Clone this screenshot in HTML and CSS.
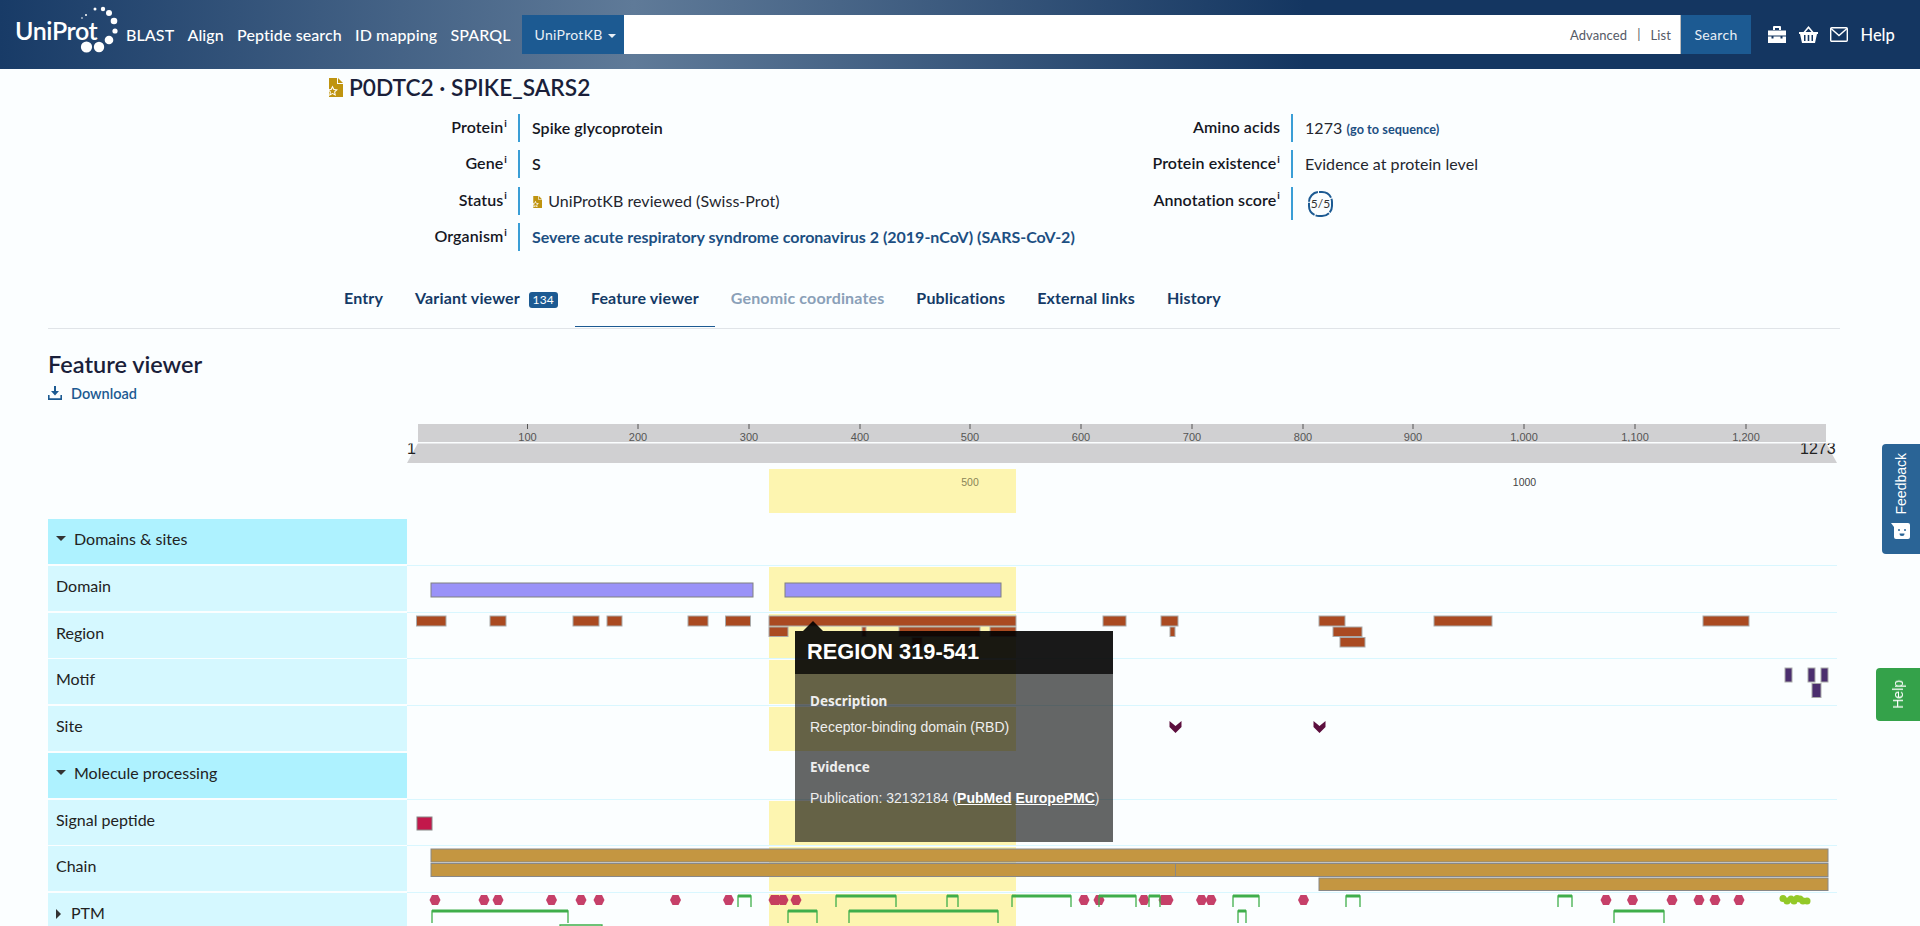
FILE: index.html
```html
<!DOCTYPE html>
<html lang="en">
<head>
  <meta charset="UTF-8" />
  <meta name="viewport" content="width=device-width, initial-scale=1.0" />
  <title>P0DTC2 · SPIKE_SARS2</title>
  <link rel="stylesheet" href="styles.css">
</head>

<body>
  <svg class="defs" width="0" height="0" aria-hidden="true">
    <symbol id="reviewed" viewBox="0 0 16 19">
      <path d="M2 0h8v6h6v13H2z" fill="#bf9410" />
      <path d="M11 0l5 5h-5z" fill="#bf9410" />
      <path d="M5.500 7.500l1.700 3.500 3.800.5-2.800 2.600.7 3.800-3.400-1.800-3.400 1.800.7-3.800L0 11.500l3.800-.5z" fill="#fff" />
      <path d="M5.500 10l1 2 2.200.3-1.600 1.500.4 2.200-2-1-2 1 .4-2.200-1.600-1.500 2.200-.3z" fill="#bf9410" />
    </symbol>
    <polygon id="ptm-dot" points="-5.500,0 -3,-5 3,-5 5.500,0 3,5 -3,5" />
  </svg>

  <header class="topbar">
    <a class="logo">
      <span class="logo-text">UniProt</span>
      <svg class="logo-dots" width="40" height="54" viewBox="0 0 40 54" fill="#fff">
        <circle cx="4" cy="18" r="0.8" />
        <circle cx="8" cy="15" r="1" />
        <circle cx="17" cy="9" r="1.500" />
        <circle cx="25" cy="9" r="2.200" />
        <circle cx="31" cy="13" r="3" />
        <circle cx="36" cy="21" r="3.300" />
        <circle cx="37" cy="31" r="2.600" />
        <circle cx="31" cy="40" r="4.300" />
        <circle cx="21" cy="47" r="5.200" />
        <circle cx="8.500" cy="47" r="5.600" />
      </svg>
    </a>
    <nav class="main-nav">
      <a>BLAST</a>
      <a>Align</a>
      <a>Peptide search</a>
      <a>ID mapping</a>
      <a>SPARQL</a>
    </nav>
    <div class="search">
      <button class="search-db">UniProtKB <span class="caret"></span></button>
      <div class="search-input">
        <a>Advanced</a>
        <span class="search-sep">|</span>
        <a>List</a>
      </div>
      <button class="search-btn">Search</button>
    </div>
    <div class="tools">
      <svg width="18" height="17" viewBox="0 0 18 17" fill="#fff">
        <path d="M6 0h6a1 1 0 0 1 1 1v3h-2V2H7v2H5V1a1 1 0 0 1 1-1z" />
        <path d="M0 4.500h18v5H0z" />
        <path d="M0 10.500h3.500v2h2v-2h7v2h2v-2H18V17H0z" />
      </svg>
      <svg width="19" height="17" viewBox="0 0 19 17" fill="#fff">
        <path d="M9.500 0l5 6h-2L9.500 2.500 6.500 6h-2z" />
        <path d="M0 6h19v2h-1l-2 9H3L1 8H0zM5 9v6h1.500V9zm3.700 0v6h1.600V9zm3.800 0v6H14V9z" />
      </svg>
      <svg width="18" height="15" viewBox="0 0 18 15" fill="none" stroke="#fff" stroke-width="1.400">
        <rect x="0.700" y="0.700" width="16.600" height="13.600" rx="1" />
        <path d="M1 1.500l8 7 8-7" />
      </svg>
      <a class="tools-help">Help</a>
    </div>
  </header>

  <main class="page">
    <h1 class="entry-title">
      <svg class="reviewed-big" width="16" height="19"><use href="#reviewed" /></svg>
      P0DTC2 · SPIKE_SARS2
    </h1>

    <section class="info">
      <div class="info-col left">
        <div class="info-row">
          <div class="info-label">Protein<sup>i</sup></div>
          <div class="info-value strong">Spike glycoprotein</div>
        </div>
        <div class="info-row">
          <div class="info-label">Gene<sup>i</sup></div>
          <div class="info-value strong">S</div>
        </div>
        <div class="info-row">
          <div class="info-label">Status<sup>i</sup></div>
          <div class="info-value">
            <svg class="reviewed-small" width="10" height="12"><use href="#reviewed" /></svg>
            UniProtKB reviewed (Swiss-Prot)
          </div>
        </div>
        <div class="info-row">
          <div class="info-label">Organism<sup>i</sup></div>
          <div class="info-value link">Severe acute respiratory syndrome coronavirus 2 (2019-nCoV) (SARS-CoV-2)</div>
        </div>
      </div>
      <div class="info-col">
        <div class="info-row">
          <div class="info-label">Amino acids</div>
          <div class="info-value">1273 <a class="seq-link">(go to sequence)</a></div>
        </div>
        <div class="info-row">
          <div class="info-label">Protein existence<sup>i</sup></div>
          <div class="info-value">Evidence at protein level</div>
        </div>
        <div class="info-row score-row">
          <div class="info-label">Annotation score<sup>i</sup></div>
          <div class="info-value">
            <svg class="score" width="25" height="26" viewBox="0 0 25 26">
              <rect class="score-ring" x="1" y="1" width="23" height="24" rx="10" pathLength="100" />
              <text x="12.500" y="17">5/5</text>
            </svg>
          </div>
        </div>
      </div>
    </section>

    <nav class="tabs">
      <a>Entry</a>
      <a>Variant viewer <span class="badge">134</span></a>
      <a class="active">Feature viewer</a>
      <a class="disabled">Genomic coordinates</a>
      <a>Publications</a>
      <a>External links</a>
      <a>History</a>
    </nav>

    <h2 class="section-title">Feature viewer</h2>
    <a class="download">
      <svg width="14" height="14" viewBox="0 0 14 14" fill="#1c5a92">
        <path d="M6 0h2v5h3L7 9.500 3 5h3z" />
        <path d="M0 9h1.600v3.300h10.800V9H14v5H0z" />
      </svg>
      Download
    </a>

    <svg class="ruler" width="1792" height="95" viewBox="48 424 1792 95">
      <rect x="418" y="424" width="1408" height="18" fill="#d0d0d2" />
      <polygon points="418,443 1826,443 1837,463 407,463" fill="#d0d0d2" />
      <rect x="769" y="469" width="247" height="44" fill="#fdf5b0" />
      <path class="ruler-ticks" d="M527.500 424v5M638 424v5M749 424v5M860 424v5M970 424v5M1081 424v5M1192 424v5M1303 424v5M1413 424v5M1524 424v5M1635 424v5M1746 424v5" />
      <g class="ruler-labels">
        <text x="527.500" y="441">100</text>
        <text x="638" y="441">200</text>
        <text x="749" y="441">300</text>
        <text x="860" y="441">400</text>
        <text x="970" y="441">500</text>
        <text x="1081" y="441">600</text>
        <text x="1192" y="441">700</text>
        <text x="1303" y="441">800</text>
        <text x="1413" y="441">900</text>
        <text x="1524" y="441">1,000</text>
        <text x="1635" y="441">1,100</text>
        <text x="1746" y="441">1,200</text>
      </g>
      <text class="ruler-end" x="407" y="454">1</text>
      <text class="ruler-end" x="1800" y="454">1273</text>
      <rect x="407" y="442" width="1430" height="1.500" fill="#fbfeff" />
      <text class="ruler-mark faded" x="970" y="486">500</text>
      <text class="ruler-mark" x="1524.500" y="486">1000</text>
    </svg>

    <section class="tracks">
      <div class="track-row head">
        <div class="track-label"><span class="arrow-down"></span>Domains &amp; sites</div>
      </div>

      <div class="track-row">
        <div class="track-label">Domain</div>
        <div class="track">
          <svg width="1430" height="46" viewBox="407 0 1430 46">
            <rect class="hl" x="769" y="1" width="247" height="44" />
            <rect class="domain" x="431" y="17" width="322" height="14" />
            <rect class="domain" x="785" y="17" width="216" height="14" />
          </svg>
        </div>
      </div>

      <div class="track-row">
        <div class="track-label">Region</div>
        <div class="track">
          <svg width="1430" height="46" viewBox="407 0 1430 46">
            <rect class="hl" x="769" y="1" width="247" height="45" />
            <g class="region">
              <rect x="416.500" y="3" width="29.500" height="10" />
              <rect x="490" y="3" width="16" height="10" />
              <rect x="573" y="3" width="26" height="10" />
              <rect x="607" y="3" width="15" height="10" />
              <rect x="688" y="3" width="20" height="10" />
              <rect x="725.500" y="3" width="25" height="10" />
              <rect x="769" y="3" width="247" height="10" />
              <rect x="1103" y="3" width="23" height="10" />
              <rect x="1161" y="3" width="17" height="10" />
              <rect x="1319" y="3" width="26" height="10" />
              <rect x="1434" y="3" width="58" height="10" />
              <rect x="1703" y="3" width="46" height="10" />
              <rect x="769" y="14" width="19" height="9.500" />
              <rect x="862" y="14" width="4" height="9.500" />
              <rect x="899" y="14" width="81" height="9.500" />
              <rect x="990" y="14" width="26" height="9.500" />
              <rect x="1170" y="14" width="5" height="9.500" />
              <rect x="1333" y="14" width="29" height="9.500" />
              <rect x="912" y="24.500" width="10" height="9.500" />
              <rect x="1340" y="24.500" width="25" height="9.500" />
            </g>
          </svg>
        </div>
      </div>

      <div class="track-row">
        <div class="track-label">Motif</div>
        <div class="track">
          <svg width="1430" height="46" viewBox="407 0 1430 46">
            <rect class="hl" x="769" y="1" width="247" height="44" />
            <g class="motif">
              <rect x="1785" y="9" width="7" height="14" />
              <rect x="1808" y="9" width="7" height="14" />
              <rect x="1821" y="9" width="7" height="14" />
              <rect x="1812" y="24.500" width="9" height="14" />
            </g>
          </svg>
        </div>
      </div>

      <div class="track-row">
        <div class="track-label">Site</div>
        <div class="track">
          <svg width="1430" height="46" viewBox="407 0 1430 46">
            <rect class="hl" x="769" y="1" width="247" height="44" />
            <polygon class="site" points="1169.500,15 1175.500,20 1181.500,15 1181.500,21 1175.500,27 1169.500,21" />
            <polygon class="site" points="1313.500,15 1319.500,20 1325.500,15 1325.500,21 1319.500,27 1313.500,21" />
          </svg>
        </div>
      </div>

      <div class="track-row head">
        <div class="track-label"><span class="arrow-down"></span>Molecule processing</div>
      </div>

      <div class="track-row">
        <div class="track-label">Signal peptide</div>
        <div class="track">
          <svg width="1430" height="46" viewBox="407 0 1430 46">
            <rect class="hl" x="769" y="1" width="247" height="44" />
            <rect class="signal" x="417" y="17" width="15" height="13" />
          </svg>
        </div>
      </div>

      <div class="track-row">
        <div class="track-label">Chain</div>
        <div class="track">
          <svg width="1430" height="46" viewBox="407 0 1430 46">
            <rect class="hl" x="769" y="1" width="247" height="44" />
            <g class="chain">
              <rect x="431" y="3" width="1397" height="13" />
              <rect x="431" y="17.500" width="744.500" height="13" />
              <rect x="1175.500" y="17.500" width="652.500" height="13" />
              <rect x="1319" y="32" width="509" height="12.500" />
            </g>
          </svg>
        </div>
      </div>

      <div class="track-row">
        <div class="track-label"><span class="arrow-right"></span>PTM</div>
        <div class="track">
          <svg width="1430" height="46" viewBox="407 0 1430 46">
            <rect class="hl" x="769" y="1" width="247" height="45" />
            <g class="ptm">
              <use href="#ptm-dot" x="435" y="7" />
              <use href="#ptm-dot" x="484" y="7" />
              <use href="#ptm-dot" x="498" y="7" />
              <use href="#ptm-dot" x="551.500" y="7" />
              <use href="#ptm-dot" x="581" y="7" />
              <use href="#ptm-dot" x="599" y="7" />
              <use href="#ptm-dot" x="675.500" y="7" />
              <use href="#ptm-dot" x="728.500" y="7" />
              <use href="#ptm-dot" x="774" y="7" />
              <use href="#ptm-dot" x="776" y="7" />
              <use href="#ptm-dot" x="783" y="7" />
              <use href="#ptm-dot" x="796" y="7" />
              <use href="#ptm-dot" x="1084" y="7" />
              <use href="#ptm-dot" x="1099" y="7" />
              <use href="#ptm-dot" x="1144" y="7" />
              <use href="#ptm-dot" x="1164" y="7" />
              <use href="#ptm-dot" x="1168" y="7" />
              <use href="#ptm-dot" x="1201.500" y="7" />
              <use href="#ptm-dot" x="1211" y="7" />
              <use href="#ptm-dot" x="1303.500" y="7" />
              <use href="#ptm-dot" x="1606" y="7" />
              <use href="#ptm-dot" x="1632.500" y="7" />
              <use href="#ptm-dot" x="1672" y="7" />
              <use href="#ptm-dot" x="1699" y="7" />
              <use href="#ptm-dot" x="1715" y="7" />
              <use href="#ptm-dot" x="1739" y="7" />
            </g>
            <g class="glyco">
              <circle cx="1783" cy="5.500" r="3.500" />
              <circle cx="1787" cy="8" r="3.500" />
              <circle cx="1791" cy="6" r="3.500" />
              <circle cx="1794" cy="8" r="3.500" />
              <circle cx="1797" cy="5.500" r="3.500" />
              <circle cx="1800" cy="6" r="3.500" />
              <circle cx="1803" cy="8" r="3.500" />
              <circle cx="1807" cy="8" r="3.500" />
            </g>
            <path class="bridge-side" d="M738 14V3H751V14M836 14V3H896V14M947 14V3H958V14M1012 14V3H1071V14M1099 14V3H1136V14M1149 14V3H1160V14M1233 14V3H1259V14M1346 14V3H1360V14M1558 14V3H1572V14M432 30V18H568V30M788 30V18H817V30M849 30V18H998V30M1238 30V18H1246V30M1614 30V18H1664V30M560 46V32H602V46" />
            <path class="bridge-top" d="M738 3H751M836 3H896M947 3H958M1012 3H1071M1099 3H1136M1149 3H1160M1233 3H1259M1346 3H1360M1558 3H1572M432 18H568M788 18H817M849 18H998M1238 18H1246M1614 18H1664" />
          </svg>
        </div>
      </div>

      <div class="tooltip">
        <div class="tooltip-head">REGION 319-541</div>
        <div class="tooltip-body">
          <h4>Description</h4>
          <p>Receptor-binding domain (RBD)</p>
          <h4>Evidence</h4>
          <p class="evidence">Publication: 32132184 (<a>PubMed</a> <a>EuropePMC</a>)</p>
        </div>
      </div>
    </section>
  </main>

  <a class="side-btn feedback">
    <span>Feedback</span>
    <svg width="20" height="16" viewBox="0 0 20 16">
      <path d="M0 0h17a2 2 0 0 1 2 2v12a2 2 0 0 1-2 2H5a2 2 0 0 1-2-2V4z" fill="#fff" />
      <circle cx="8" cy="7" r="1" fill="#2a6496" />
      <circle cx="14" cy="7" r="1" fill="#2a6496" />
      <path d="M8.500 10.500h5a2.500 2.500 0 0 1-5 0z" fill="#2a6496" />
    </svg>
  </a>
  <a class="side-btn help"><span>Help</span></a>
</body>
</html>
```

FILE: styles.css
```css
* {
  box-sizing: border-box;
}

html, body {
  height: 926px;
  overflow: hidden;
}

body {
  margin: 0;
  background-color: #fbfeff;
  color: #1a1f3a;
  font-family: 'Lato', sans-serif;
  font-size: 16px;
}

a {
  color: inherit;
  text-decoration: none;
}

.defs {
  position: absolute;
}

/* top bar */
.topbar {
  display: flex;
  align-items: flex-start;
  height: 69px;
  background: linear-gradient(to right, #183b67 0, #5f7a98 33%, #143661 68%, #143661 100%);
  color: #fff;
}

.logo {
  position: relative;
  width: 126px;
  height: 69px;
  flex: none;
}

.logo-text {
  position: absolute;
  left: 15px;
  top: 14px;
  font-size: 25px;
  font-weight: 600;
  line-height: 32px;
  letter-spacing: -0.4px;
}

.logo-dots {
  position: absolute;
  left: 78px;
  top: 0;
}

.main-nav {
  display: flex;
  gap: 13.200px;
  width: 396px;
  flex: none;
  line-height: 70px;
  font-size: 16px;
  font-weight: 500;
  letter-spacing: 0.1px;
}

.search {
  display: flex;
  width: 1229px;
  height: 39px;
  margin-top: 15px;
  flex: none;
}

.search-db {
  width: 102px;
  border: none;
  background-color: #1c5a92;
  color: #e8eff6;
  font-family: inherit;
  font-size: 14px;
  letter-spacing: 0.3px;
  padding: 0 0 0 5px;
}

.caret {
  display: inline-block;
  width: 0;
  height: 0;
  margin-left: 2px;
  vertical-align: 2px;
  border-left: 4px solid transparent;
  border-right: 4px solid transparent;
  border-top: 4px solid #e8eff6;
}

.search-input {
  flex: 1;
  display: flex;
  justify-content: flex-end;
  align-items: center;
  gap: 10px;
  padding-right: 9px;
  background-color: #fff;
  border-right: 1px solid #bbb;
  color: #555a66;
  font-size: 13px;
  letter-spacing: 0.1px;
}

.search-sep {
  margin-top: -2px;
}

.search-btn {
  width: 70px;
  border: none;
  background-color: #1c5a92;
  color: #e8eff6;
  font-family: inherit;
  font-size: 14px;
  letter-spacing: 0.3px;
  padding: 0;
}

.tools {
  display: flex;
  align-items: center;
  gap: 12.500px;
  height: 39px;
  margin-top: 15px;
  padding-left: 17px;
}

.tools-help {
  font-size: 16.500px;
  font-weight: 500;
}

/* entry summary */
.page {
  padding: 0 80px 0 48px;
}

.entry-title {
  display: flex;
  align-items: center;
  gap: 6px;
  height: 37px;
  margin: 0 0 8px 279px;
  font-size: 22.700px;
  font-weight: 600;
}

.info {
  display: flex;
}

.info-col {
  width: 773px;
  flex: none;
}

.info-col.left {
  margin-left: 279px;
}

.info-row {
  display: flex;
  height: 28px;
  margin-bottom: 8.300px;
}

.score-row {
  height: 33px;
}

.info-label {
  width: 191px;
  padding-right: 11px;
  flex: none;
  text-align: right;
  font-weight: 600;
  color: #15171f;
  line-height: 26px;
  letter-spacing: 0.1px;
}

.info-label sup {
  font-size: 10px;
  font-weight: 700;
  line-height: 0;
  margin-left: 1px;
}

.info-value {
  padding-left: 12px;
  border-left: 2px solid #3a9ed6;
  line-height: 28px;
  color: #24262e;
  letter-spacing: 0.05px;
}

.info-value.strong {
  font-weight: 600;
  color: #15171f;
}

.info-value.link {
  font-weight: 700;
  color: #1c4f82;
  letter-spacing: 0;
}

.reviewed-small {
  margin-right: 2px;
  vertical-align: -1px;
}

.seq-link {
  font-size: 12.700px;
  font-weight: 700;
  color: #1c4f82;
}

.score {
  display: block;
  margin: 4px 0 0 3px;
}

.score-ring {
  fill: none;
  stroke: #1c5a92;
  stroke-width: 2;
  stroke-dasharray: 18.500 1.500;
}

.score text {
  font-size: 12px;
  fill: #333;
  text-anchor: middle;
}

/* tabs */
.tabs {
  display: flex;
  height: 61px;
  margin-top: 9px;
  padding-left: 280px;
  border-bottom: 1px solid #e0e4e8;
  color: #143a66;
  font-weight: 700;
  line-height: 60px;
  letter-spacing: 0.15px;
}

.tabs a {
  position: relative;
  padding: 0 16px;
}

.tabs a.active::after {
  content: "";
  position: absolute;
  left: 0;
  right: 0;
  bottom: 1px;
  height: 1px;
  background-color: #1c5a92;
}

.tabs a.disabled {
  color: #8aa0b8;
}

.badge {
  display: inline-block;
  margin-left: 5px;
  margin-right: 1px;
  padding: 0 4px;
  background-color: #1c5a92;
  border-radius: 3px;
  color: #fff;
  font-size: 12px;
  font-weight: 400;
  line-height: 16px;
  vertical-align: 0;
}

/* feature viewer */
.section-title {
  margin: 19px 0 0;
  font-size: 23.500px;
  font-weight: 600;
  line-height: 32px;
}

.download {
  display: flex;
  align-items: center;
  gap: 9px;
  margin-top: 3px;
  height: 20px;
  color: #1c5a92;
  font-size: 14.500px;
  font-weight: 600;
}

.ruler {
  display: block;
  margin-top: 21px;
  font-family: 'Liberation Sans', sans-serif;
}

.ruler-ticks {
  stroke: #555;
  stroke-width: 1;
  fill: none;
}

.ruler-labels text {
  font-size: 11px;
  fill: #555;
  text-anchor: middle;
}

.ruler-end {
  font-size: 16px;
  fill: #222;
}

.ruler-mark {
  font-size: 10.500px;
  fill: #444;
  text-anchor: middle;
}

.ruler-mark.faded {
  fill: #8a8458;
}

.tracks {
  position: relative;
  display: grid;
  grid-auto-rows: 45px;
  row-gap: 1.750px;
}

.track-row {
  display: flex;
}

.track-label {
  width: 359px;
  flex: none;
  padding-left: 8px;
  background-color: #d5f8ff;
  color: #222;
  line-height: 40px;
}

.track-row.head .track-label {
  padding-left: 26px;
  position: relative;
  background-color: #aef2ff;
}

.arrow-down {
  position: absolute;
  left: 8px;
  top: 17px;
  border-left: 5px solid transparent;
  border-right: 5px solid transparent;
  border-top: 5px solid #333;
}

.arrow-right {
  display: inline-block;
  margin-right: 10px;
  border-top: 5px solid transparent;
  border-bottom: 5px solid transparent;
  border-left: 5px solid #333;
}

.track {
  width: 1430px;
  height: 46.750px;
  margin-top: -1px;
  border-top: 1px solid #d9f7ff;
}

.track svg {
  display: block;
  overflow: visible;
}

.hl {
  fill: #fdf5b0;
}

.domain {
  fill: #9a92f8;
  stroke: #808080;
}

.region rect {
  fill: #aa4a21;
  stroke: #aaa;
}

.motif rect {
  fill: #4b2e6e;
  stroke: #aaa;
}

.site {
  fill: #5c0f3e;
}

.signal {
  fill: #c2184b;
  stroke: #888;
}

.chain rect {
  fill: #c49641;
  stroke: #888;
}

.ptm {
  fill: #bd1f50;
  opacity: 0.85;
}

.glyco {
  fill: #93c928;
}

.bridge-side {
  fill: none;
  stroke: #3fae4b;
  stroke-width: 1.300;
}

.bridge-top {
  fill: none;
  stroke: #3fae4b;
  stroke-width: 3;
}

/* tooltip over the tracks */
.tooltip {
  position: absolute;
  left: 747px;
  top: 112px;
  width: 318px;
  height: 211px;
  background-color: rgba(0, 0, 0, 0.6);
  color: #eee;
  font-family: 'Liberation Sans', sans-serif;
  font-size: 14px;
}

.tooltip::before {
  content: "";
  position: absolute;
  left: 8px;
  top: -10px;
  border-left: 10px solid transparent;
  border-right: 10px solid transparent;
  border-bottom: 10px solid rgba(0, 0, 0, 0.9);
}

.tooltip-head {
  height: 43px;
  padding-left: 12px;
  background-color: rgba(0, 0, 0, 0.75);
  color: #fff;
  font-size: 21.800px;
  font-weight: 700;
  line-height: 42px;
}

.tooltip-body {
  padding: 18px 0 0 15px;
}

.tooltip-body h4 {
  margin: 0 0 9px;
  font-family: 'Noto Sans', sans-serif;
  font-size: 13.500px;
  font-weight: 700;
  line-height: 18px;
}

.tooltip-body p {
  margin: 0 0 23px;
  line-height: 16px;
  white-space: nowrap;
}

.tooltip-body .evidence {
  margin-top: 14px;
}

.tooltip-body a {
  color: #fff;
  font-weight: 700;
  text-decoration: underline;
}

/* side buttons */
.side-btn {
  position: fixed;
  right: 0;
  display: flex;
  flex-direction: column;
  align-items: center;
  color: #fff;
  font-family: 'Liberation Sans', sans-serif;
  font-size: 14px;
  border-radius: 4px 0 0 4px;
}

.side-btn span {
  writing-mode: vertical-rl;
  transform: rotate(180deg);
}

.feedback {
  top: 444px;
  width: 38px;
  height: 110px;
  gap: 9px;
  padding-top: 9px;
  background-color: #2a6496;
}

.help {
  top: 668px;
  width: 44px;
  height: 53px;
  justify-content: center;
  background-color: #34a24a;
}
```
